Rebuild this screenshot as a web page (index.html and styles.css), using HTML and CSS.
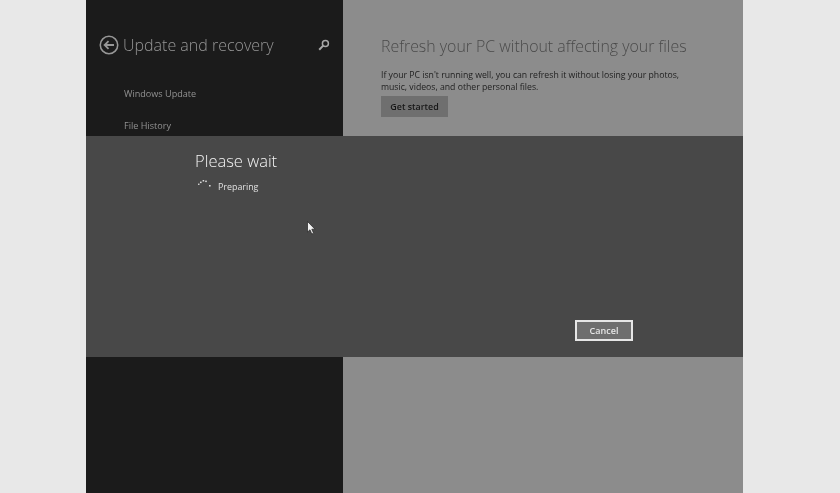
FILE: index.html
```html
<!DOCTYPE html>
<html lang="en">
<head>
<meta charset="utf-8">
<title>Update and recovery</title>
<link rel="stylesheet" href="styles.css">
</head>
<body>
<div class="screen">
  <aside class="sidebar">
    <header class="side-head">
      <svg class="back" width="20" height="20" viewBox="0 0 22 22" fill="none" stroke="#979797">
        <circle cx="11" cy="11" r="9.6" stroke-width="1.7"/>
        <path d="M16.5 11H6.5M10.5 6.8L6.2 11l4.3 4.2" stroke-width="2"/>
      </svg>
      <h1 class="side-title">Update and recovery</h1>
      <svg class="search" width="12" height="12" viewBox="0 0 12 12" fill="none" stroke="#a8a8a8">
        <circle cx="7.4" cy="4.4" r="3" stroke-width="1.5"/>
        <path d="M5.2 6.6L1.2 10.8" stroke-width="2"/>
      </svg>
    </header>
    <nav class="side-nav">
      <a class="side-link">Windows Update</a>
      <a class="side-link">File History</a>
    </nav>
  </aside>
  <main class="content">
    <h2 class="content-title">Refresh your PC without affecting your files</h2>
    <p class="content-text">If your PC isn't running well, you can refresh it without losing your photos,<br>music, videos, and other personal files.</p>
    <button class="start-btn" type="button">Get started</button>
  </main>
  <section class="dialog">
    <div class="dialog-body">
      <h2 class="dialog-title">Please wait</h2>
      <div class="status">
        <svg class="spinner" width="13" height="10" viewBox="0 0 13 10" fill="#dcdcdc">
          <rect x="0" y="4.6" width="1.5" height="1.3"/>
          <rect x="2" y="2.6" width="1.6" height="1.5"/>
          <rect x="4.6" y="1" width="1.6" height="1.5"/>
          <rect x="7.2" y="1.6" width="1.6" height="1.5"/>
          <rect x="11" y="6" width="1.6" height="1.5"/>
        </svg>
        <span class="status-text">Preparing</span>
      </div>
    </div>
    <div class="dialog-actions">
      <button class="cancel-btn" type="button">Cancel</button>
    </div>
  </section>
  <svg class="cursor" width="9" height="14" viewBox="0 0 9 14">
    <path d="M0.5 0.5V11L3 8.8L4.8 13L6.6 12.2L4.8 8.2H8Z" fill="#f2f2f2" stroke="#222" stroke-width="0.7"/>
  </svg>
</div>
</body>
</html>
```
FILE: styles.css
```css
* { box-sizing: border-box; }
html, body { height: 100%; }
body {
  margin: 0;
  background: #e8e8e8;
  font-family: "Open Sans", "Noto Sans", sans-serif;
  overflow: hidden;
}
.screen {
  position: relative;
  display: grid;
  grid-template-columns: 257px 400px;
  width: 657px;
  height: 493px;
  margin-left: 86px;
  filter: blur(0.35px);
}
.sidebar { background: #1b1b1b; padding: 35px 13px 0 13px; }
.side-head { display: flex; align-items: center; height: 20px; }
.back { flex: none; margin-right: 4px; }
.side-title {
  flex: 1;
  margin: 0;
  font-size: 16px;
  font-weight: 300;
  color: #969696;
  white-space: nowrap;
}
.search { flex: none; margin-right: 0; margin-top: -1px; }
.side-nav { display: flex; flex-direction: column; gap: 15px; padding: 29.5px 0 0 25px; }
.side-link { font-size: 9.1px; line-height: 17px; color: #929292; }
.content { background: #8c8c8c; padding: 35px 0 0 38px; }
.content-title {
  margin: 0;
  font-size: 15.9px;
  line-height: 22px;
  font-weight: 300;
  color: #4a4a4a;
  white-space: nowrap;
}
.content-text {
  margin: 11px 0 0;
  padding-top: 1px;
  font-size: 8.7px;
  line-height: 12px;
  color: #1e1e1e;
  white-space: nowrap;
}
.start-btn {
  display: block;
  width: 67px;
  height: 21px;
  margin-top: 3px;
  padding: 0;
  border: 0;
  background: #6f6f6f;
  color: #161616;
  font: 600 8.9px "Open Sans", "Noto Sans", sans-serif;
}
.dialog {
  position: absolute;
  left: 0;
  top: 136px;
  width: 657px;
  height: 221px;
  display: flex;
  flex-direction: column;
  justify-content: space-between;
  background: #484848;
}
.dialog-body { padding: 14px 0 0 109px; }
.dialog-title {
  margin: 0;
  font-size: 16.5px;
  line-height: 22px;
  font-weight: 300;
  color: #f4f4f4;
}
.status { display: flex; align-items: center; gap: 7px; margin-top: 8px; padding-left: 3px; }
.spinner { flex: none; margin-top: -6px; }
.status-text { font-size: 8.9px; line-height: 14px; color: #e0e0e0; }
.dialog-actions { display: flex; justify-content: flex-end; padding: 0 110px 16px 0; }
.cancel-btn {
  width: 58px;
  height: 21px;
  padding: 0;
  border: 2px solid #e6e6e6;
  background: #6e6e6e;
  color: #e6e6e6;
  font: 600 9px "Open Sans", "Noto Sans", sans-serif;
}
.cursor { position: absolute; left: 221px; top: 221px; }
```
